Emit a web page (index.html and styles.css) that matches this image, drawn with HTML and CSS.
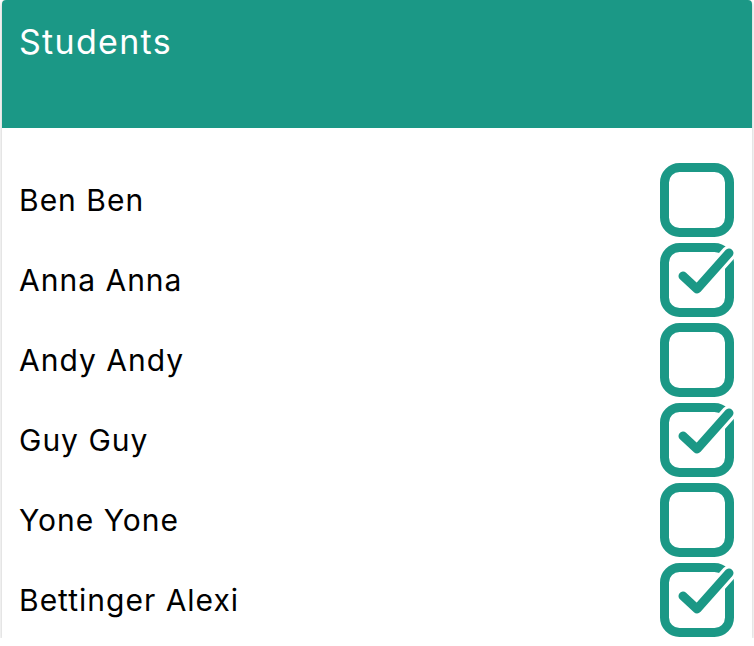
FILE: index.html
```html
<!DOCTYPE html>
<html>
<head>
<meta charset="utf-8">
<link rel="stylesheet" href="styles.css">
</head>
<body>
<div class="card">
  <div class="header"><h1 class="title">Students</h1></div>
  <ul class="list">
    <li class="row"><span class="name">Ben Ben</span>
      <svg class="box" viewBox="0 0 74 74"><rect x="4.5" y="4.5" width="65" height="65" rx="15" class="frame"/></svg></li>
    <li class="row"><span class="name">Anna Anna</span>
      <svg class="box" viewBox="0 0 74 74"><rect x="4.5" y="4.5" width="65" height="65" rx="15" class="frame"/><polyline points="23,33 37,46 69,10" class="gap"/><polyline points="23,33 37,46 69,10" class="tick"/></svg></li>
    <li class="row"><span class="name">Andy Andy</span>
      <svg class="box" viewBox="0 0 74 74"><rect x="4.5" y="4.5" width="65" height="65" rx="15" class="frame"/></svg></li>
    <li class="row"><span class="name">Guy Guy</span>
      <svg class="box" viewBox="0 0 74 74"><rect x="4.5" y="4.5" width="65" height="65" rx="15" class="frame"/><polyline points="23,33 37,46 69,10" class="gap"/><polyline points="23,33 37,46 69,10" class="tick"/></svg></li>
    <li class="row"><span class="name">Yone Yone</span>
      <svg class="box" viewBox="0 0 74 74"><rect x="4.5" y="4.5" width="65" height="65" rx="15" class="frame"/></svg></li>
    <li class="row"><span class="name">Bettinger Alexi</span>
      <svg class="box" viewBox="0 0 74 74"><rect x="4.5" y="4.5" width="65" height="65" rx="15" class="frame"/><polyline points="23,33 37,46 69,10" class="gap"/><polyline points="23,33 37,46 69,10" class="tick"/></svg></li>
  </ul>
</div>
</body>
</html>
```

FILE: styles.css
```css
html, body {
  margin: 0;
  padding: 0;
  background: #ffffff;
}
body {
  padding: 0 2px;
  font-family: Inter, "Noto Sans", sans-serif;
}
.card {
  background: #ffffff;
  border-radius: 4px 4px 0 0;
  box-shadow: 0 2px 4px rgba(0, 0, 0, 0.25);
  height: 638px;
  overflow: hidden;
}
.header {
  background: #1b9886;
  height: 128px;
  padding: 20px 17px 0;
  box-sizing: border-box;
}
.title {
  margin: 0;
  color: #ffffff;
  font-size: 34px;
  font-weight: 400;
  letter-spacing: 1.3px;
  line-height: 44px;
}
.list {
  list-style: none;
  margin: 0;
  padding: 30px 0 0;
}
.row {
  height: 80px;
  display: flex;
  align-items: center;
  justify-content: space-between;
  padding: 0 18px 0 17px;
}
.name {
  font-size: 30px;
  letter-spacing: 1px;
  color: #000000;
  line-height: 34px;
  margin-top: 4px;
}
.box {
  width: 74px;
  height: 74px;
  margin-top: 4px;
  display: block;
}
.frame {
  fill: none;
  stroke: #1b9886;
  stroke-width: 9;
}
.gap {
  fill: none;
  stroke: #ffffff;
  stroke-width: 15;
  stroke-linecap: round;
  stroke-linejoin: round;
}
.tick {
  fill: none;
  stroke: #1b9886;
  stroke-width: 9;
  stroke-linecap: round;
  stroke-linejoin: round;
}
```
